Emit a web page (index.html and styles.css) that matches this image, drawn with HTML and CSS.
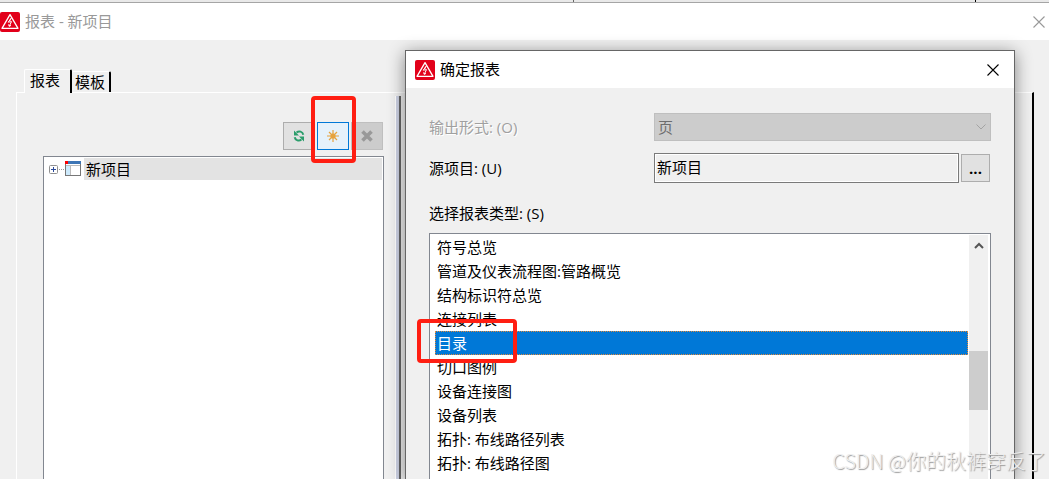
FILE: index.html
```html
<!DOCTYPE html>
<html lang="zh-CN">
<head>
<meta charset="utf-8">
<title>报表 - 新项目</title>
<link rel="stylesheet" href="styles.css">
</head>
<body>
<svg class="defs" aria-hidden="true">
  <symbol id="app-logo" viewBox="0 0 20 20">
    <rect width="20" height="20" rx="2" fill="#e2001a"/>
    <path d="M10 2.6 18 16.3H2Z" fill="none" stroke="#fff" stroke-width="1.3" stroke-linejoin="round"/>
    <path d="M11.4 6 8.2 10.2 11.5 9.6 9.4 14M8.6 12.4 9.2 14.4 11 13.4M10.5 6.5 9.8 9" fill="none" stroke="#fff" stroke-width="1"/>
  </symbol>
  <symbol id="close" viewBox="0 0 12 12">
    <path d="M.5.5l11 11M11.5.5l-11 11" fill="none" stroke="currentColor" stroke-width="1.1"/>
  </symbol>
</svg>
<div class="desktop">
  <div class="backdrop"><i></i><i class="dark"></i></div>
  <main class="window">
    <header class="titlebar">
      <svg class="logo"><use href="#app-logo"/></svg>
      <h1>报表 - 新项目</h1>
      <button class="close" aria-label="关闭"><svg><use href="#close"/></svg></button>
    </header>
    <div class="tabs" role="tablist">
      <button class="tab active" role="tab" aria-selected="true">报表</button>
      <button class="tab" role="tab" aria-selected="false">模板</button>
    </div>
    <section class="panel">
      <div class="left">
        <div class="toolbar">
          <button class="tool" aria-label="刷新">
            <svg viewBox="0 0 12 12" fill="none" stroke="#2a9d6b" stroke-width="2"><path d="M3.500 2.500C6 .6 9.600 1.400 10.300 4.800M8.500 9.500C6 11.400 2.400 10.600 1.700 7.200"/><path d="M1 .5V5.500H6ZM11 11.500V6.500H6Z" fill="#2a9d6b" stroke="none"/></svg>
          </button>
          <button class="tool current" aria-label="新建">
            <svg viewBox="0 0 12 12" fill="none" stroke="#e6a23c" stroke-width="1.2"><path d="M6 0V12M0 6H12M2 2 10 10M10 2 2 10"/><circle cx="6" cy="6" r="2.600" fill="#e6a23c" stroke="none"/></svg>
          </button>
          <button class="tool off" aria-label="删除" disabled>
            <svg viewBox="0 0 12 12" fill="none" stroke="#999" stroke-width="3.600"><path d="M1.500 1.500 10.500 10.500M10.500 1.500 1.500 10.500"/></svg>
          </button>
        </div>
        <div class="tree" role="tree">
          <div class="node" role="treeitem" aria-expanded="false">
            <svg class="branch" viewBox="0 0 32 16">
              <rect x=".5" y="4.500" width="8" height="8" rx="1" fill="#fff" stroke="#919191"/>
              <path d="M2 8.500H7M4.500 6V11" stroke="#2b4a9b"/>
              <path d="M10 8.500H16" stroke="#999" stroke-dasharray="1 1"/>
              <rect x="16.500" y=".5" width="15" height="14" fill="#fff" stroke="#777"/>
              <path d="M17 5h4v9h-4z" fill="#cdeafc"/>
              <path d="M21.500 5V14M17 4.500H31" stroke="#bbb"/>
              <path d="M16 0H32V3H16z" fill="#3d75b5"/>
              <path d="M16 0h3v3h-3z" fill="#f00"/>
            </svg>
            <span class="node-name">新项目</span>
          </div>
        </div>
      </div>
      <div class="splitter"></div>
    </section>
  </main>

  <section class="dialog" role="dialog" aria-labelledby="dialog-title">
    <header class="titlebar">
      <svg class="logo"><use href="#app-logo"/></svg>
      <h2 id="dialog-title">确定报表</h2>
      <button class="close" aria-label="关闭"><svg><use href="#close"/></svg></button>
    </header>
    <form class="form">
      <div class="row">
        <label class="muted" for="output">输出形式: (O)</label>
        <div class="combo">
          <select id="output" disabled><option>页</option></select>
          <svg viewBox="0 0 10 6"><path d="M.5.5 5 5 9.500.5" fill="none" stroke="#a3a3a3"/></svg>
        </div>
      </div>
      <div class="row">
        <label for="source">源项目: (U)</label>
        <div class="source">
          <input id="source" type="text" value="新项目" readonly>
          <button type="button" class="browse">...</button>
        </div>
      </div>
      <p class="list-label" id="type-label">选择报表类型: (S)</p>
      <div class="listbox">
        <ul role="listbox" aria-labelledby="type-label">
          <li role="option">符号总览</li>
          <li role="option">管道及仪表流程图:管路概览</li>
          <li role="option">结构标识符总览</li>
          <li role="option">连接列表</li>
          <li role="option" class="selected" aria-selected="true">目录</li>
          <li role="option">切口图例</li>
          <li role="option">设备连接图</li>
          <li role="option">设备列表</li>
          <li role="option">拓扑: 布线路径列表</li>
          <li role="option">拓扑: 布线路径图</li>
        </ul>
        <div class="scrollbar">
          <svg viewBox="0 0 10 7"><path d="M1 6 5 2 9 6" fill="none" stroke="#555" stroke-width="2"/></svg>
          <div class="thumb"></div>
        </div>
      </div>
    </form>
  </section>

  <div class="mark mark-new"></div>
  <div class="mark mark-item"></div>
  <div class="watermark">CSDN @你的秋裤穿反了</div>
</div>
</body>
</html>
```
FILE: styles.css
```css
* { box-sizing: border-box; }

body {
  margin: 0;
  font: 15px/24px "Open Sans", "Noto Sans CJK SC", sans-serif;
  color: #000;
}

button, input, select { font: inherit; color: inherit; margin: 0; }
h1, h2, p, ul { margin: 0; padding: 0; font-size: inherit; font-weight: 400; }
.defs { position: absolute; width: 0; height: 0; }

.desktop {
  position: relative;
  display: flex;
  flex-direction: column;
  height: 100vh;
  overflow: hidden;
  background: #f0f0f0;
}

.backdrop {
  display: flex;
  justify-content: flex-end;
  gap: 401px;
  height: 3px;
  padding-right: 73px;
  background: #e9e9e9;
  border-bottom: 1px solid #a5a5a5;
}
.backdrop i { width: 1px; background: #666; }
.backdrop .dark { background: #000; }

.window {
  flex: 1;
  display: flex;
  flex-direction: column;
  min-height: 0;
}

.titlebar {
  display: flex;
  align-items: center;
  gap: 5px;
  height: 37px;
  background: #fff;
}
.titlebar h1, .titlebar h2 { padding-bottom: 2px; }
.window > .titlebar { color: #999; padding-right: 4px; }
.logo { width: 20px; height: 20px; flex: none; }
.close {
  display: flex;
  margin-left: auto;
  padding: 0;
  border: 0;
  background: none;
}
.close svg { width: 12px; height: 12px; }

.tabs {
  display: flex;
  align-items: flex-end;
  padding: 29px 24px 0;
}
.tab {
  height: 21px;
  padding: 0 4px 0 3px;
  line-height: 20px;
  background: #f0f0f0;
  border: solid #fff;
  border-width: 1px 0 0;
  border-right: 2px solid #000;
  border-radius: 2px 2px 0 0;
}
.tab.active {
  position: relative;
  height: 24px;
  margin-bottom: -1px;
  padding: 0 10px 3px 5px;
  border-left: 1px solid #fff;
}

.panel {
  flex: 1;
  display: flex;
  gap: 11px;
  min-height: 0;
  margin: 0 15px 0 16px;
  border: solid #fff;
  border-width: 1px 0 0 1px;
  border-right: 2px solid #000;
}
.left {
  display: flex;
  flex-direction: column;
  gap: 6px;
  width: 367px;
  padding: 29px 0 0 26px;
}
.toolbar { display: flex; justify-content: flex-end; gap: 2px; padding-right: 1px; }
.tool {
  display: grid;
  place-items: center;
  width: 32px;
  height: 28px;
  padding: 0;
  background: #e1e1e1;
  border: 1px solid #adadad;
}
.tool svg { width: 12px; height: 12px; }
.tool.current { background: #e5f1fb; border-color: #0078d7; }
.tool.off { background: #ccc; border-color: #bfbfbf; }

.tree {
  flex: 1;
  padding: 1px 1px 0 5px;
  background: #fff;
  border: 1px solid #828790;
  border-bottom: 0;
}
.node { display: flex; align-items: center; gap: 3px; }
.branch { width: 32px; height: 16px; flex: none; }
.node-name { flex: 1; height: 22px; padding-left: 2px; line-height: 22px; background: #e3e3e3; }

.splitter {
  width: 6px;
  margin-top: 3px;
  background: #cdd2e4;
  border-left: 1px solid #fff;
  border-right: 2px solid #666;
}

.dialog {
  position: absolute;
  inset: 50px 34px 0 405px;
  display: flex;
  flex-direction: column;
  background: #f0f0f0;
  border: 1px solid #666;
  border-bottom: 0;
  box-shadow: 0 3px 16px rgba(0, 0, 0, .45);
}
.dialog > .titlebar { padding: 0 15px 0 9px; }

.form {
  flex: 1;
  display: flex;
  flex-direction: column;
  gap: 12px;
  min-height: 0;
  padding: 25px 23px 0;
}
.row {
  display: grid;
  grid-template-columns: 225px 1fr;
  align-items: center;
}
.muted { color: #a0a0a0; text-shadow: 1px 1px #fff; }

.combo { display: grid; align-items: center; }
.combo > * { grid-area: 1 / 1; }
.combo select {
  appearance: none;
  width: 100%;
  height: 28px;
  padding: 0 3px;
  color: #6d6d6d;
  background: #ccc;
  border: 1px solid #bfbfbf;
  border-radius: 0;
  opacity: 1;
}
.combo svg { justify-self: end; width: 10px; height: 6px; margin-right: 5px; }

.source { display: flex; align-items: center; gap: 2px; padding-right: 1px; }
.source input {
  flex: 1;
  min-width: 0;
  height: 30px;
  padding: 0 2px 4px;
  background: #f0f0f0;
  border: 1px solid #7a7a7a;
  border-radius: 0;
  box-shadow: inset 0 0 0 1px #fff;
}
.browse {
  width: 29px;
  height: 28px;
  padding: 0;
  background: #e1e1e1;
  border: 1px solid #adadad;
  font-weight: 700;
}

.list-label { padding-top: 6px; }
.listbox {
  flex: 1;
  display: flex;
  min-height: 0;
  margin-top: -4px;
  padding: 1px 2px 0 5px;
  background: #fff;
  border: 1px solid #828790;
  border-bottom: 0;
}
.listbox ul { flex: 1; list-style: none; }
.listbox li { padding: 0 2px; }
.listbox .selected {
  padding: 0 1px;
  line-height: 22px;
  color: #fff;
  background: #0078d7;
  border: 1px dotted #e08a3c;
}
.scrollbar {
  display: flex;
  flex-direction: column;
  align-items: center;
  gap: 102px;
  width: 19px;
  margin-left: 1px;
  padding-top: 7px;
  background: #f0f0f0;
}
.scrollbar svg { width: 10px; height: 7px; }
.thumb { width: 100%; height: 59px; background: #cdcdcd; }

.mark {
  position: absolute;
  border: 4px solid #ff1e12;
  border-radius: 4px;
}
.mark-new { left: 311px; top: 96px; width: 45px; height: 67px; }
.mark-item { left: 417px; top: 319px; width: 100px; height: 44px; }

.watermark {
  position: absolute;
  right: 3px;
  bottom: 4px;
  font-family: "Noto Sans CJK SC", sans-serif;
  font-size: 20px;
  font-weight: 300;
  line-height: 28px;
  color: #eee;
  text-shadow: 1px 1px 1px #999;
}
```
